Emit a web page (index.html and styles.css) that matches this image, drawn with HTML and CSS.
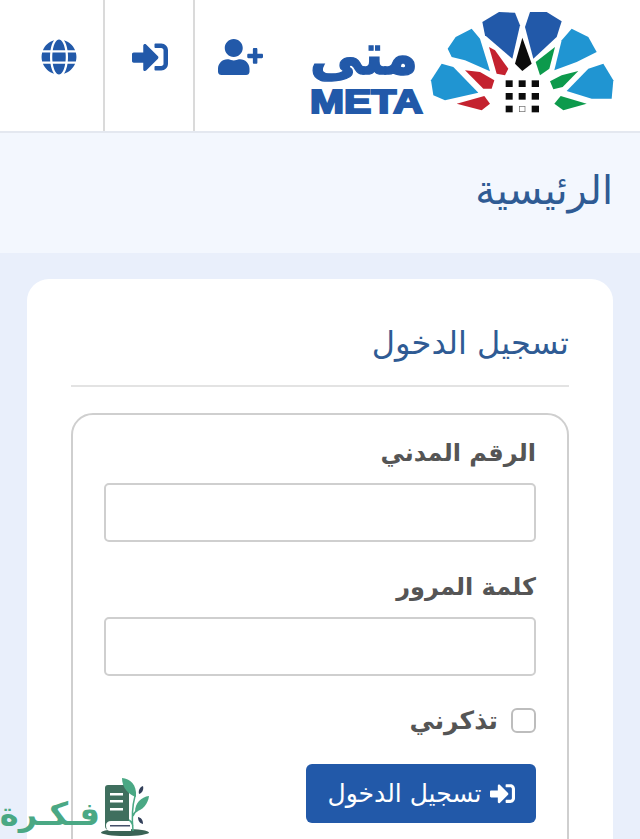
FILE: index.html
```html
<!DOCTYPE html>
<html lang="ar" dir="rtl">
<head>
<meta charset="utf-8">
<title>متى</title>
<link rel="stylesheet" href="styles.css">
</head>
<body>
<header class="topbar">
  <a class="brand" href="#">
    <svg class="logo" viewBox="30 20 960 360" width="320" height="120">
      <g class="logo-dark">
        <polygon points="577,65 627,35 675,37 690,75 667,175 585,105"/>
        <polygon points="705,80 720,35 770,35 815,63 800,110 730,175"/>
      </g>
      <g class="logo-light">
        <polygon points="473,145 497,110 545,85 570,115 600,213 525,180 485,170"/>
        <polygon points="845,85 895,110 920,155 860,185 793,210 815,120"/>
        <polygon points="423,240 455,190 490,200 565,277 465,300 430,285"/>
        <polygon points="830,272 895,205 940,190 970,240 965,295 905,295"/>
      </g>
      <g class="logo-red">
        <polygon points="597,140 615,150 655,205 645,225 620,220"/>
        <polygon points="525,210 570,215 613,240 605,265 580,265"/>
        <polygon points="500,310 583,287 600,310 575,330"/>
      </g>
      <g class="logo-green">
        <polygon points="795,140 778,205 750,225 737,185"/>
        <polygon points="865,212 815,225 780,243 790,267 818,260"/>
        <polygon points="812,287 890,310 820,330 793,310"/>
      </g>
      <g class="logo-black">
        <polygon points="697,112 725,190 697,212 675,190"/>
        <rect x="647" y="240" width="21" height="20"/><rect x="686" y="240" width="21" height="20"/><rect x="725" y="240" width="22" height="20"/>
        <rect x="647" y="278" width="21" height="20"/><rect x="686" y="278" width="21" height="20"/><rect x="725" y="278" width="22" height="20"/>
        <rect x="647" y="316" width="21" height="20"/><rect x="725" y="316" width="22" height="20"/>
        <rect class="logo-hollow" x="688" y="318" width="17" height="16"/>
      </g>
      <text class="logo-ar" x="222" y="222" text-anchor="middle" textLength="325" lengthAdjust="spacingAndGlyphs">متى</text>
      <text class="logo-en" x="60" y="338" textLength="338" lengthAdjust="spacingAndGlyphs" direction="ltr">META</text>
    </svg>
  </a>
  <nav class="actions">
    <a class="action action-user" href="#" aria-label="تسجيل">
      <svg class="icon-user" viewBox="0 0 640 512"><path d="M624 208h-64v-64c0-8.800-7.200-16-16-16h-32c-8.800 0-16 7.200-16 16v64h-64c-8.800 0-16 7.200-16 16v32c0 8.800 7.200 16 16 16h64v64c0 8.800 7.200 16 16 16h32c8.800 0 16-7.200 16-16v-64h64c8.800 0 16-7.200 16-16v-32c0-8.800-7.200-16-16-16zm-400 48c70.700 0 128-57.300 128-128S294.700 0 224 0 96 57.300 96 128s57.300 128 128 128zm89.600 32h-16.700c-22.200 10.200-46.900 16-72.900 16s-50.600-5.800-72.900-16h-16.700C60.200 288 0 348.200 0 422.400V464c0 26.500 21.500 48 48 48h352c26.500 0 48-21.500 48-48v-41.600c0-74.200-60.200-134.400-134.400-134.400z"/></svg>
    </a>
    <a class="action action-login" href="#" aria-label="دخول">
      <svg class="icon-square" viewBox="0 0 512 512"><path d="M416 448h-84c-6.600 0-12-5.400-12-12v-40c0-6.600 5.400-12 12-12h84c17.700 0 32-14.300 32-32V160c0-17.700-14.300-32-32-32h-84c-6.600 0-12-5.400-12-12V76c0-6.600 5.400-12 12-12h84c53 0 96 43 96 96v192c0 53-43 96-96 96zm-47-201L201 79c-15-15-41-4.500-41 17v96H24c-13.300 0-24 10.700-24 24v96c0 13.300 10.700 24 24 24h136v96c0 21.500 26 32 41 17l168-168c9.300-9.400 9.300-24.600 0-34z"/></svg>
    </a>
    <a class="action action-lang" href="#" aria-label="اللغة">
      <svg class="icon-square" viewBox="0 0 496 512"><path d="M336.500 160C322 70.700 287.800 8 248 8s-74 62.700-88.500 152h177zM152 256c0 22.200 1.200 43.500 3.300 64h185.300c2.100-20.500 3.300-41.800 3.300-64s-1.200-43.500-3.300-64H155.300c-2.100 20.500-3.300 41.800-3.300 64zm324.700-96c-28.600-67.900-86.500-120.400-158-141.600 24.400 33.800 41.200 84.700 50 141.600h108zM177.200 18.400C105.800 39.600 47.800 92.100 19.300 160h108c8.700-56.900 25.500-107.800 49.900-141.600zM487.400 192H372.700c2.100 21 3.300 42.500 3.300 64s-1.200 43-3.300 64h114.600c5.500-20.500 8.600-41.800 8.600-64s-3.100-43.500-8.500-64zM120 256c0-21.500 1.200-43 3.300-64H8.600C3.200 212.500 0 233.800 0 256s3.200 43.500 8.600 64h114.600c-2-21-3.200-42.500-3.200-64zm39.500 96c14.500 89.300 48.700 152 88.500 152s74-62.700 88.500-152h-177zm159.300 141.600c71.400-21.200 129.400-73.700 158-141.600h-108c-8.800 56.900-25.600 107.800-50 141.600zM19.300 352c28.600 67.900 86.500 120.400 158 141.600-24.400-33.800-41.200-84.700-50-141.600h-108z"/></svg>
    </a>
  </nav>
</header>

<section class="page-band">
  <h1 class="page-title">الرئيسية</h1>
</section>

<main class="content">
  <div class="card">
    <h2 class="card-title">تسجيل الدخول</h2>
    <form class="login-box">
      <label class="field-label" for="civil">الرقم المدني</label>
      <input class="field-input" id="civil" type="text">
      <label class="field-label" for="pass">كلمة المرور</label>
      <input class="field-input" id="pass" type="password">
      <label class="remember">
        <input class="remember-box" type="checkbox">
        <span>تذكرني</span>
      </label>
      <button class="submit" type="button">
        <svg class="submit-icon" viewBox="0 0 512 512"><path d="M416 448h-84c-6.600 0-12-5.400-12-12v-40c0-6.600 5.400-12 12-12h84c17.700 0 32-14.300 32-32V160c0-17.700-14.300-32-32-32h-84c-6.600 0-12-5.400-12-12V76c0-6.600 5.400-12 12-12h84c53 0 96 43 96 96v192c0 53-43 96-96 96zm-47-201L201 79c-15-15-41-4.500-41 17v96H24c-13.300 0-24 10.700-24 24v96c0 13.300 10.700 24 24 24h136v96c0 21.500 26 32 41 17l168-168c9.300-9.400 9.300-24.600 0-34z"/></svg>
        <span>تسجيل الدخول</span>
      </button>
    </form>
  </div>
</main>

<div class="watermark" dir="ltr">
  <span class="wm-text" dir="rtl">فـكـرة</span>
  <svg class="wm-icon" viewBox="0 -5 50 61" width="50" height="61">
    <ellipse class="wm-base" cx="25" cy="50.500" rx="24" ry="3.500"/>
    <path class="wm-book" d="M8 3h18c2 0 3 1 3 3v42H9c-3 0-4-2-4-4V6c0-2 1-3 3-3z"/>
    <rect class="wm-line" x="10" y="11" width="13" height="2.500"/>
    <rect class="wm-line" x="10" y="18" width="13" height="2.500"/>
    <rect class="wm-line" x="10" y="26" width="13" height="2.500"/>
    <path class="wm-page" d="M6 43c0-2 2-4 5-4h20v10H10c-3 0-4-3-4-6z"/>
    <rect class="wm-rule" x="10" y="43" width="20" height="1.500"/>
    <path class="wm-stem" d="M33 49c-1-10-1-24 2-35M33 34c1-3 3-5 5-6M33 44c-1-3-2-5-4-6"/>
    <path class="wm-leaf" d="M22 -4c8 1 15 6 14 19C29 13 22 6 22 -4z"/>
    <path class="wm-leaf" d="M49 14c-1 8-6 14-14 16 0-9 6-15 14-16z"/>
    <path class="wm-dark-leaf" d="M43 4c1 4-1 7-4 8-1-4 1-7 4-8z"/>
    <path class="wm-dark-leaf" d="M38 35c4 1 5 4 5 7-4-1-5-4-5-7z"/>
  </svg>
</div>
</body>
</html>
```

FILE: styles.css
```css
* { box-sizing: border-box; }

html, body {
  margin: 0;
  height: 839px;
  overflow: hidden;
}

body {
  background: #e9effb;
  font-family: "DejaVu Sans", sans-serif;
  position: relative;
}

.topbar {
  display: flex;
  justify-content: space-between;
  align-items: stretch;
  height: 133px;
  background: #fff;
  border-bottom: 2px solid #e4e8f0;
}

.brand {
  display: block;
  padding: 7px 20px 0 0;
}

.logo { display: block; }
.logo-dark { fill: #2259a9; }
.logo-light { fill: #2095d2; }
.logo-red { fill: #c4222f; }
.logo-green { fill: #0d9a4c; }
.logo-black { fill: #0c0c0c; }
.logo-hollow { fill: #fff; stroke: #666; stroke-width: 2; }
.logo-ar {
  font-family: "DejaVu Sans", sans-serif;
  font-weight: 700;
  font-size: 170px;
  fill: #2259a9;
  stroke: #2259a9;
  stroke-width: 4px;
}
.logo-en {
  font-family: "Liberation Sans", sans-serif;
  font-weight: 700;
  font-size: 97px;
  fill: #2259a9;
  stroke: #2259a9;
  stroke-width: 6px;
}

.actions {
  display: flex;
  align-items: stretch;
}

.action {
  display: flex;
  justify-content: center;
  padding-top: 39px;
  fill: #2259a9;
}

.action-user { width: 90px; }
.action-login {
  width: 90px;
  border-right: 2px solid #dadada;
  padding-left: 2px;
}
.action-lang {
  width: 105px;
  border-right: 2px solid #dadada;
  padding-left: 14px;
}

.icon-user { width: 45px; height: 36px; }
.icon-square { width: 36px; height: 36px; }

.page-band {
  height: 120px;
  background: #f3f7fe;
  padding: 0 27px 0 0;
}

.page-title {
  margin: 0;
  padding-top: 27px;
  font-size: 40px;
  line-height: 60px;
  font-weight: 400;
  color: #2f5b94;
}

.content {
  padding: 26px 27px 0;
}

.card {
  background: #fff;
  border-radius: 22px;
  padding: 40px 44px 0;
  height: 700px;
}

.card-title {
  margin: 0;
  height: 68px;
  padding-bottom: 20px;
  border-bottom: 2px solid #e3e3e3;
  font-size: 32px;
  line-height: 48px;
  font-weight: 400;
  color: #2f5b94;
}

.login-box {
  margin-top: 26px;
  border: 2px solid #cfcfcf;
  border-radius: 22px;
  padding: 18px 31px 0 31px;
  height: 500px;
  display: flex;
  flex-direction: column;
  align-items: stretch;
}

.field-label {
  font-size: 24px;
  line-height: 40px;
  font-weight: 700;
  color: #555;
  height: 50px;
}

.field-input {
  height: 59px;
  width: 100%;
  margin-bottom: 25px;
  border: 2px solid #cfcfcf;
  border-radius: 5px;
  background: #fff;
}

.remember {
  display: flex;
  align-items: center;
  gap: 13px;
  height: 38px;
  font-size: 25px;
  font-weight: 700;
  color: #555;
}

.remember-box {
  appearance: none;
  width: 25px;
  height: 25px;
  margin: 0;
  border: 2px solid #bdbdbd;
  border-radius: 6px;
  background: #fff;
}

.submit {
  margin-top: 25px;
  align-self: flex-start;
  width: 230px;
  height: 59px;
  display: flex;
  align-items: center;
  justify-content: center;
  gap: 8px;
  border: 0;
  border-radius: 6px;
  background: #2259a9;
  color: #fff;
  fill: #fff;
  font-family: "DejaVu Sans", sans-serif;
  font-size: 25px;
}

.submit-icon { width: 25px; height: 25px; }

.watermark {
  position: absolute;
  left: 0;
  bottom: 0;
  display: flex;
  align-items: flex-end;
}

.wm-text {
  font-size: 32px;
  line-height: 50px;
  font-weight: 700;
  color: #4aa884;
  width: 100px;
  white-space: nowrap;
}

.wm-icon { display: block; margin-bottom: 1px; }
.wm-base { fill: #3a6355; }
.wm-book { fill: #3f6f5e; }
.wm-line { fill: #fff; }
.wm-page { fill: #fff; }
.wm-rule { fill: #44506a; }
.wm-stem { fill: none; stroke: #4aa884; stroke-width: 1.500; }
.wm-leaf { fill: #4aa884; }
.wm-dark-leaf { fill: #33405a; }
```
